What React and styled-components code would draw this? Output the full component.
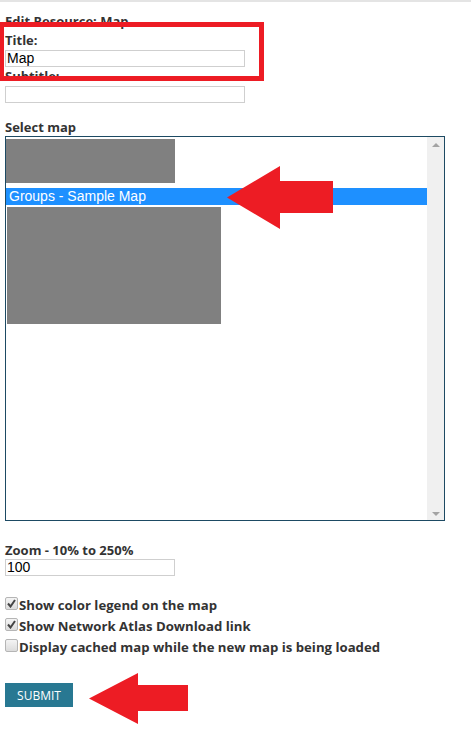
import React from 'react';
import styled, { createGlobalStyle } from 'styled-components';

const GlobalStyle = createGlobalStyle`
  html, body {
    margin: 0;
    padding: 0;
    background: #ffffff;
  }

  body {
    font-family: "Open Sans", "Liberation Sans", Arial, sans-serif;
    color: #333333;
  }
`;

const Page = styled.div`
  position: relative;
  min-height: 740px;
  box-sizing: border-box;
  border-top: 2px solid #e4e4e4;
  padding: 10px 0 0 5px;
  overflow: hidden;
`;

const Label = styled.div`
  font-size: 13px;
  font-weight: 700;
  line-height: ${props => props.lh || 19}px;
  margin-top: ${props => props.mt || 0}px;
  white-space: nowrap;
`;

const TextInput = styled.div`
  box-sizing: border-box;
  width: ${props => props.w}px;
  height: 17px;
  border: 1px solid #cfcfcf;
  padding: 0 1px;
  font-family: "Liberation Sans", Arial, sans-serif;
  font-size: 14px;
  line-height: 15px;
  color: #000;
`;

const ListBox = styled.div`
  box-sizing: border-box;
  width: 440px;
  height: 385px;
  border: 1px solid #1d4a63;
  display: flex;
`;

const ListItems = styled.div`
  flex: 1;
  display: flex;
  flex-direction: column;
  align-items: flex-start;
  padding-top: 2px;
`;

const Redacted = styled.div`
  background: #808080;
  width: ${props => props.w}px;
  height: ${props => props.h}px;
  margin-left: ${props => props.ml || 0}px;
  margin-top: ${props => props.mt || 0}px;
`;

const SelectedRow = styled.div`
  align-self: stretch;
  margin-top: 5px;
  height: 17px;
  background: #1e90ff;
  color: #ffffff;
  font-family: "Liberation Sans", Arial, sans-serif;
  font-size: 14px;
  line-height: 17px;
  padding-left: 3px;
`;

const ScrollBar = styled.div`
  width: 17px;
  background: #f0f0f0;
  display: flex;
  flex-direction: column;
  justify-content: space-between;
  align-items: center;
  padding: 6px 0 4px;
`;

const ScrollArrow = styled.div`
  width: 0;
  height: 0;
  border-left: 4px solid transparent;
  border-right: 4px solid transparent;
  ${props => props.down
    ? 'border-top: 4px solid #a3a3a3;'
    : 'border-bottom: 4px solid #a3a3a3;'}
`;

const CheckList = styled.div`
  margin-top: 18px;
  display: flex;
  flex-direction: column;
`;

const CheckRow = styled.div`
  display: flex;
  align-items: center;
  gap: 1px;
  height: 21px;
  font-size: 13.2px;
  font-weight: 700;
  white-space: nowrap;
`;

const Box = styled.span`
  box-sizing: border-box;
  width: 13px;
  height: 13px;
  border: 1px solid #b5b5b5;
  border-radius: 2px;
  background: linear-gradient(#f4f4f4, #dcdcdc);
  display: flex;
  align-items: center;
  justify-content: center;
  margin-top: -2px;
`;

const SubmitButton = styled.button`
  margin-top: 26px;
  height: 24px;
  width: 68px;
  border: none;
  background: #287892;
  color: #ffffff;
  font-family: "Open Sans", "Liberation Sans", Arial, sans-serif;
  font-size: 12px;
  padding: 0;
  display: block;
`;

const HighlightBox = styled.div`
  position: absolute;
  left: -1px;
  top: 20px;
  width: 265px;
  height: 59px;
  box-sizing: border-box;
  border: 5px solid #ed1c24;
  pointer-events: none;
`;

const Arrow = styled.svg`
  position: absolute;
  left: ${props => props.x}px;
  top: ${props => props.y}px;
  pointer-events: none;
`;

const Check = () => (
  <svg width="9" height="9" viewBox="0 0 9 9">
    <path d="M1 4.5 L3.5 7.5 L8 1" fill="none" stroke="#444" strokeWidth="2" />
  </svg>
);

const RedArrow = ({ x, y, w, h, head, shaftTop, shaftBottom }) => (
  <Arrow x={x} y={y} width={w} height={h} viewBox={`0 0 ${w} ${h}`}>
    <polygon
      fill="#ed1c24"
      points={`0,${h / 2} ${head},0 ${head},${shaftTop} ${w},${shaftTop} ${w},${shaftBottom} ${head},${shaftBottom} ${head},${h}`}
    />
  </Arrow>
);

const options = [
  { label: 'Show color legend on the map', checked: true },
  { label: 'Show Network Atlas Download link', checked: true },
  { label: 'Display cached map while the new map is being loaded', checked: false }
];

export default function App() {
  return (
    <Page>
      <GlobalStyle />
      <Label>Edit Resource: Map</Label>
      <Label>Title:</Label>
      <TextInput w={240}>Map</TextInput>
      <Label>Subtitle:</Label>
      <TextInput w={240} />

      <Label lh={18} mt={15}>Select map</Label>
      <ListBox>
        <ListItems>
          <Redacted w={169} h={44} />
          <SelectedRow>Groups - Sample Map</SelectedRow>
          <Redacted w={214} h={117} ml={1} mt={2} />
        </ListItems>
        <ScrollBar>
          <ScrollArrow />
          <ScrollArrow down />
        </ScrollBar>
      </ListBox>

      <Label lh={17} mt={21}>Zoom - 10% to 250%</Label>
      <TextInput w={170}>100</TextInput>

      <CheckList>
        {options.map((opt, i) => (
          <CheckRow key={i}>
            <Box>{opt.checked && <Check />}</Box>
            {opt.label}
          </CheckRow>
        ))}
      </CheckList>

      <SubmitButton>SUBMIT</SubmitButton>

      <HighlightBox />
      <RedArrow x={227} y={164} w={106} h={63} head={53} shaftTop={15} shaftBottom={47} />
      <RedArrow x={89} y={671} w={99} h={51} head={49} shaftTop={12} shaftBottom={38} />
    </Page>
  );
}
